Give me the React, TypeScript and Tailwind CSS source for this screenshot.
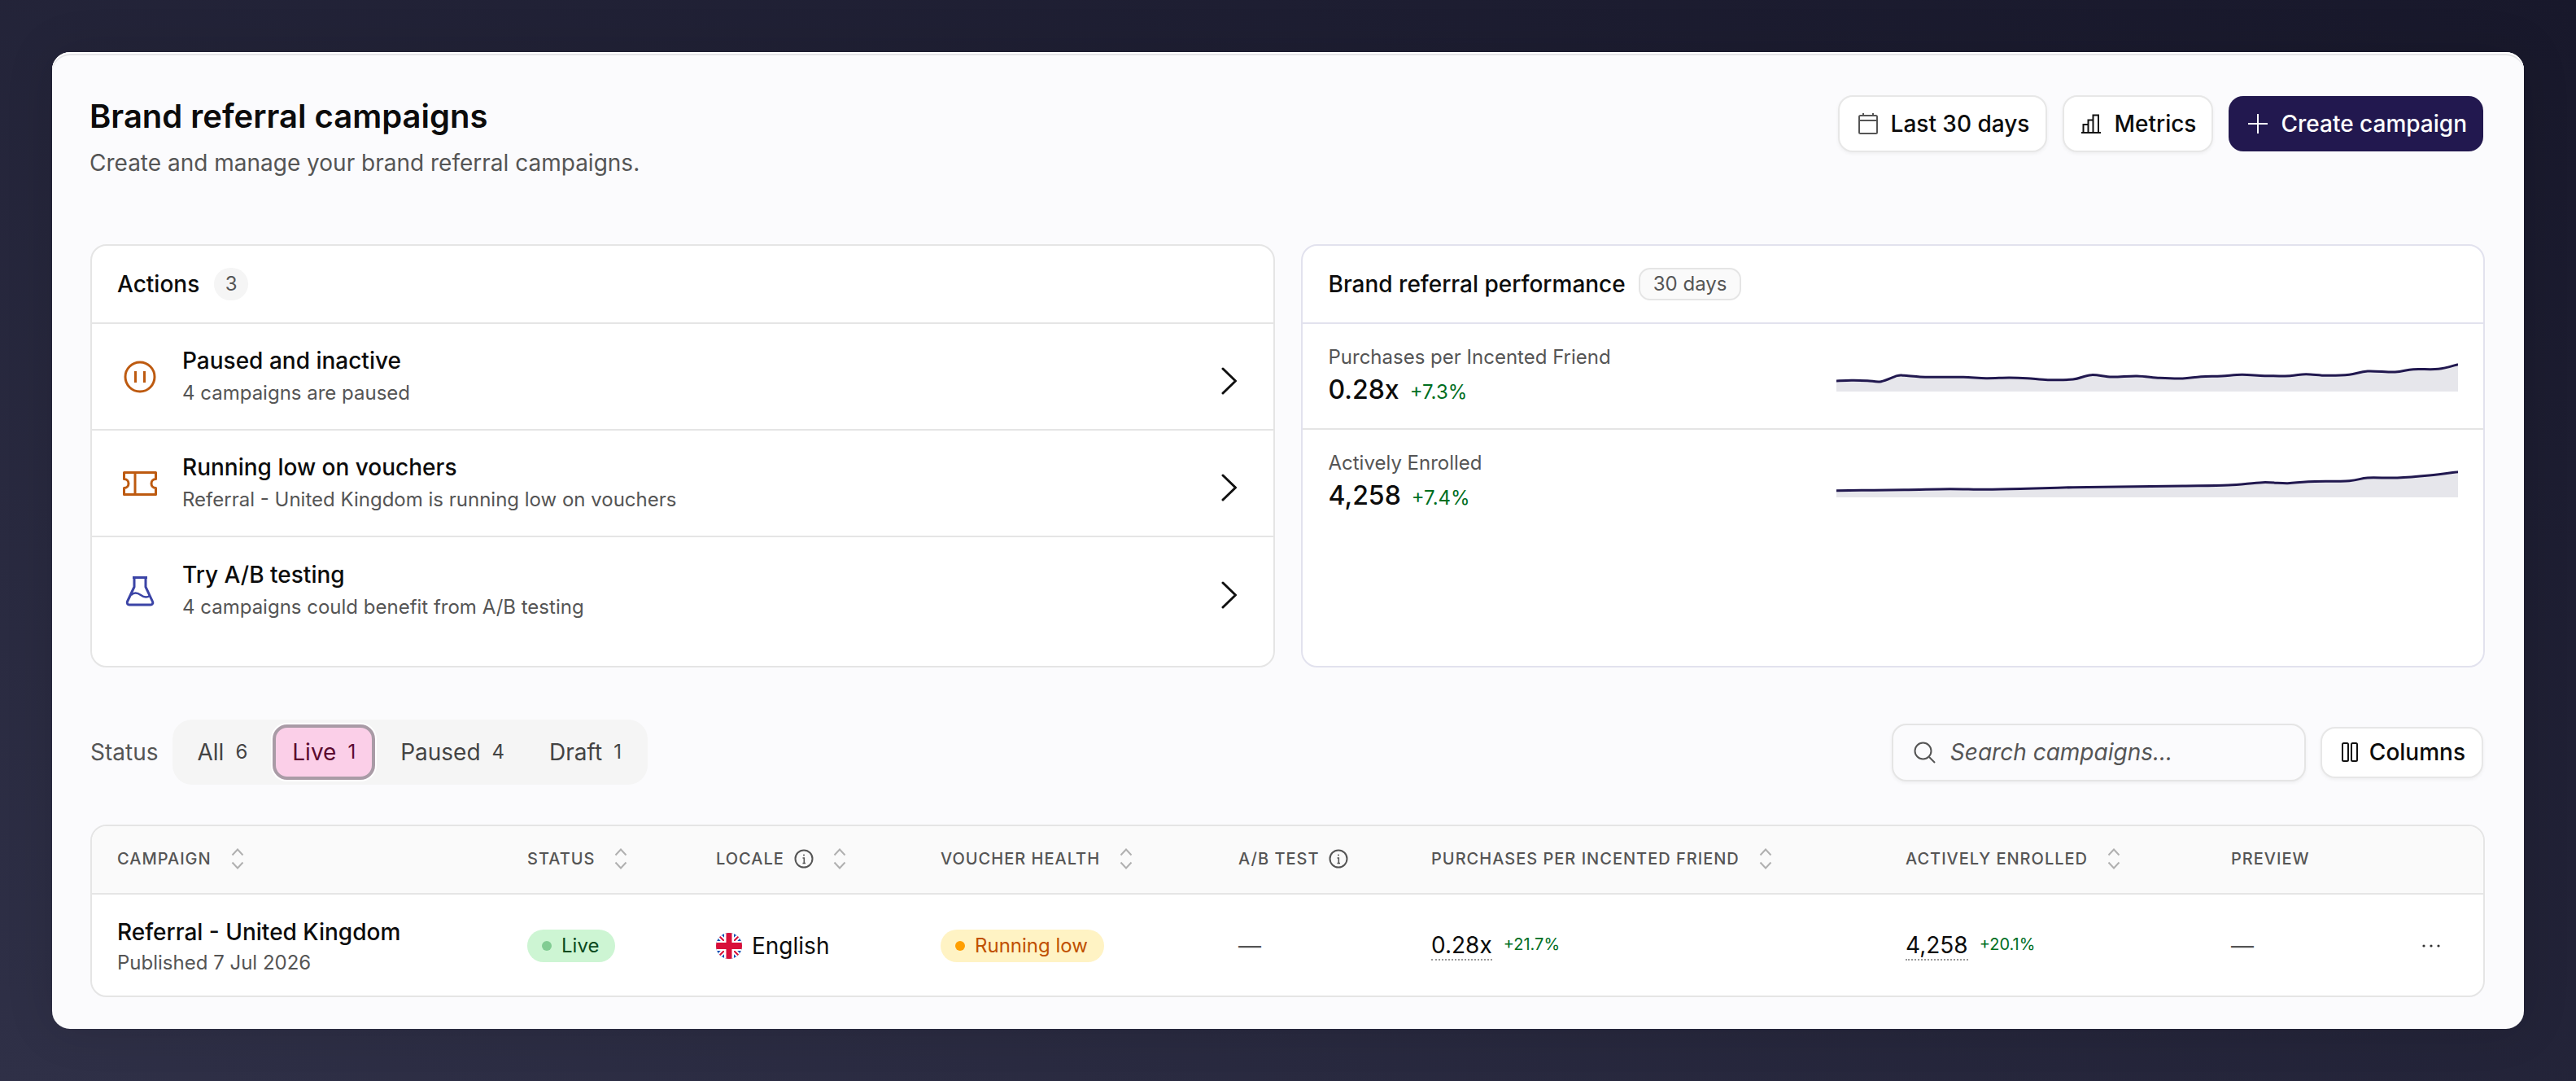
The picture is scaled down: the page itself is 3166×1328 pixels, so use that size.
import React from "react";

const Sort = () => (
  <svg width="16" height="26" viewBox="0 0 16 26" fill="none" stroke="#b0b0b0" strokeWidth="2" className="shrink-0">
    <path d="M1.5 8.5 8 1.5l6.5 7M1.5 17.5l6.5 7 6.5-7" />
  </svg>
);

const Info = () => (
  <svg width="24" height="24" viewBox="0 0 24 24" fill="none" stroke="#555" strokeWidth="2" className="shrink-0">
    <circle cx="12" cy="12" r="10.5" />
    <path d="M10.5 11H12.3V17.5M10.5 17.5H14" strokeWidth="1.6" />
    <circle cx="12" cy="7.5" r="1" fill="#555" stroke="none" />
  </svg>
);

const Chevron = () => (
  <svg width="20" height="34" viewBox="0 0 20 34" fill="none" stroke="#111" strokeWidth="3" strokeLinecap="round" strokeLinejoin="round" className="mt-[10px] shrink-0">
    <path d="M2 2 17.5 17 2 32" />
  </svg>
);

const PauseIcon = () => (
  <svg width="40" height="40" viewBox="0 0 40 40" fill="none" stroke="#bd5a10" strokeWidth="3">
    <circle cx="20" cy="20" r="18" />
    <path d="M14.5 13v14M25.5 13v14" />
  </svg>
);

const TicketIcon = () => (
  <svg width="42" height="30" viewBox="0 0 42 30" fill="none" stroke="#bd5a10" strokeWidth="3" strokeLinejoin="round">
    <path d="M1.5 1.5H40.5V9.5a5.5 5.5 0 0 0 0 11V28.5H1.5V20.5a5.5 5.5 0 0 0 0-11Z" />
    <path d="M15 1.5v27" />
  </svg>
);

const FlaskIcon = () => (
  <svg width="36" height="38" viewBox="0 0 36 38" fill="none" stroke="#3b44a6" strokeWidth="3" strokeLinejoin="round">
    <path d="M9 2.5H27" />
    <path d="M11 2.5V14L2.5 32c-.9 2 .3 4 2.5 4H31c2.2 0 3.4-2 2.5-4L25 14V2.5" />
    <path d="M7 24c4-4 8-3 12 0s8 3 11 1" strokeWidth="2.5" />
  </svg>
);

const Flag = () => (
  <svg width="32" height="32" viewBox="0 0 32 32" className="shrink-0">
    <defs>
      <clipPath id="flagc">
        <circle cx="16" cy="16" r="16" />
      </clipPath>
    </defs>
    <g clipPath="url(#flagc)">
      <rect width="32" height="32" fill="#0a4fb5" />
      <path d="M0 0 32 32M32 0 0 32" stroke="#fff" strokeWidth="6" />
      <path d="M0 0 32 32M32 0 0 32" stroke="#d80f3a" strokeWidth="2" />
      <rect x="10" width="12" height="32" fill="#fff" />
      <rect y="10" width="32" height="12" fill="#fff" />
      <rect x="12.5" width="7" height="32" fill="#d80f3a" />
      <rect y="12" width="32" height="8" fill="#d80f3a" />
    </g>
  </svg>
);

function ActionRow({ icon, title, sub, last }: { icon: React.ReactNode; title: string; sub: string; last?: boolean }) {
  return (
    <div className={`flex h-[131px] items-center pr-[44px] pl-[37px] ${last ? "" : "border-b-2 border-[#e5e5e5]"}`}>
      <div className="flex w-[44px] shrink-0 justify-center">{icon}</div>
      <div className="ml-[30px] flex-1 pb-[2px]">
        <div className="text-[28px] leading-[40px] font-medium text-[#0c0c0c]">{title}</div>
        <div className="mt-[2px] text-[24px] leading-[36px] text-[#555]">{sub}</div>
      </div>
      <Chevron />
    </div>
  );
}

function smooth(pts: string) {
  const n = pts.split(" ").map(Number);
  const p: [number, number][] = [];
  for (let i = 0; i < n.length; i += 2) p.push([n[i], n[i + 1]]);
  let d = `M${p[0][0]} ${p[0][1]}`;
  for (let i = 0; i < p.length - 1; i++) {
    const a = p[Math.max(i - 1, 0)];
    const b = p[i];
    const c = p[i + 1];
    const e = p[Math.min(i + 2, p.length - 1)];
    d += `C${b[0] + (c[0] - a[0]) / 6} ${b[1] + (c[1] - a[1]) / 6} ${c[0] - (e[0] - b[0]) / 6} ${c[1] - (e[1] - b[1]) / 6} ${c[0]} ${c[1]}`;
  }
  return d;
}

function Spark({ pts }: { pts: string }) {
  const d = smooth(pts);
  return (
    <svg width="764" height="70" viewBox="102 0 1361 210" preserveAspectRatio="none" className="block">
      <path d={`${d} L1463 210 L102 210 Z`} fill="#e6e6eb" />
      <path d={d} fill="none" stroke="#21184f" strokeWidth="3" vectorEffect="non-scaling-stroke" strokeLinejoin="round" />
    </svg>
  );
}

const s1 =
  "102 171 135 169 170 170 200 173 235 152 250 151 285 156 320 157 380 157 430 161 480 159 520 161 565 167 620 165 660 149 705 156 760 153 810 160 860 162 900 155 945 153 990 148 1040 152 1095 152 1130 146 1175 151 1225 148 1265 135 1325 138 1365 128 1420 127 1463 110";
const s2 =
  "102 185 250 182 350 179 430 181 520 178 620 173 720 171 860 168 960 165 1035 155 1090 158 1135 152 1225 149 1265 138 1330 138 1400 129 1463 116";

function Metric({ label, value, delta, pts, last }: { label: string; value: string; delta: string; pts: string; last?: boolean }) {
  return (
    <div className={`flex h-[130px] pr-[31px] pl-[32px] ${last ? "" : "border-b-2 border-[#e5e5e5]"}`}>
      <div className="flex-1 pt-[23px]">
        <div className="text-[24px] leading-[36px] text-[#555]">{label}</div>
        <div className="flex items-baseline gap-[13px]">
          <span className="text-[32px] leading-[44px] font-medium text-[#0c0c0c]">{value}</span>
          <span className="text-[24px] leading-[44px] text-[#006e1f]">{delta}</span>
        </div>
      </div>
      <div className="pt-[13px]">
        <Spark pts={pts} />
      </div>
    </div>
  );
}

function Tab({ label, n, active }: { label: string; n: string; active?: boolean }) {
  return (
    <div
      className={
        active
          ? "flex h-[68px] items-center gap-[14px] rounded-[18px] border-4 border-[#a99ba6] bg-[#fbcfe8] px-[20px] text-[#5b0a2f] shadow-[0_0_0_2px_#ffffff]"
          : "flex h-[68px] items-center gap-[14px] px-[24px] text-[#444]"
      }
    >
      <span className="text-[28px] leading-[40px]">{label}</span>
      <span className="text-[24px] leading-[40px]">{n}</span>
    </div>
  );
}

function Th({ label, info, sort = true }: { label: string; info?: boolean; sort?: boolean }) {
  return (
    <div className="flex items-center gap-[24px]">
      <div className="flex items-center gap-[12px]">
        <span className="text-[20px] leading-[28px] font-medium tracking-[0.05em] text-[#555] uppercase">{label}</span>
        {info ? <Info /> : null}
      </div>
      {sort ? <Sort /> : null}
    </div>
  );
}

const Dash = () => <span className="text-[28px] leading-[40px] text-[#555]">—</span>;

const Pill = ({ dot, bg, text, label }: { dot: string; bg: string; text: string; label: string }) => (
  <span className={`inline-flex h-[40px] items-center gap-[12px] rounded-full pr-[20px] pl-[18px] text-[24px] leading-[36px] ${bg} ${text}`}>
    <span className={`h-[12px] w-[12px] rounded-full ${dot}`} />
    {label}
  </span>
);

const Value = ({ v, d }: { v: string; d: string }) => (
  <div className="flex items-start gap-[14px]">
    <span className="border-b-2 border-dotted border-[#999] text-[28px] leading-[34px] text-[#0c0c0c]">{v}</span>
    <span className="pt-[2px] text-[20px] leading-[28px] text-[#006e1f]">{d}</span>
  </div>
);

const cols = "grid grid-cols-[504px_232px_276px_366px_237px_583px_400px_233px_1fr] pl-[31px]";
const btn = "flex items-center rounded-[18px] border-2 border-[#e7e7e7] bg-white text-[28px] font-medium text-[#0c0c0c] shadow-[0_2px_4px_rgba(0,0,0,0.05)]";

export default function App() {
  return (
    <div className="h-[1328px] w-full overflow-hidden bg-linear-to-bl from-[#18182b] to-[#2f3047] px-[64px] pt-[64px] font-['Inter',sans-serif]">
      <div className="h-[1200px] rounded-[22px] bg-[#fbfbfd] pt-[51px] pr-[48px] pl-[47px] shadow-[inset_0_2px_0_#ffffff,inset_0_4px_0_#e5e5e8,0_0_60px_rgba(0,0,0,0.12)]">
        <header className="flex h-[185px] items-start justify-between">
          <div className="-ml-[1px]">
            <h1 className="text-[40px] leading-[56px] font-semibold text-[#0c0c0c]">Brand referral campaigns</h1>
            <p className="mt-[8px] text-[28px] leading-[42px] text-[#555]">Create and manage your brand referral campaigns.</p>
          </div>
          <div className="mt-[2px] mr-[2px] flex items-center gap-[19px]">
            <button className={`${btn} h-[70px] gap-[16px] pr-[20px] pl-[23px]`}>
              <svg width="24" height="28" viewBox="0 0 24 28" fill="none" stroke="#555" strokeWidth="2">
                <rect x="1" y="4" width="22" height="22" rx="1.5" />
                <path d="M1 10H23M6 1V5M18 1V5" />
              </svg>
              Last 30 days
            </button>
            <button className={`${btn} h-[70px] gap-[16px] pr-[19px] pl-[21px]`}>
              <svg width="24" height="24" viewBox="0 0 24 24" fill="none" stroke="#111" strokeWidth="2">
                <path d="M0 23H24M2.5 23V13H8.5V23M8.5 23V7.5H14.5V23M14.5 23V1.5H21V23" />
              </svg>
              Metrics
            </button>
            <button className="flex h-[68px] items-center gap-[16px] rounded-[18px] bg-[#22184f] pr-[20px] pl-[24px] text-[28px] font-medium text-white">
              <svg width="24" height="24" viewBox="0 0 24 24" fill="none" stroke="#fff" strokeWidth="2">
                <path d="M12 0V24M0 12H24" />
              </svg>
              Create campaign
            </button>
          </div>
        </header>

        <section className="grid h-[520px] grid-cols-2 gap-[32px]">
          <div className="overflow-hidden rounded-[20px] border-2 border-[#e5e5e5] bg-white">
            <div className="flex h-[96px] items-center gap-[18px] border-b-2 border-[#e5e5e5] pl-[31px]">
              <span className="text-[28px] font-medium text-[#0c0c0c]">Actions</span>
              <span className="flex h-[40px] w-[42px] items-center justify-center rounded-full bg-[#f5f5f5] text-[24px] text-[#555]">3</span>
            </div>
            <ActionRow icon={<PauseIcon />} title="Paused and inactive" sub="4 campaigns are paused" />
            <ActionRow icon={<TicketIcon />} title="Running low on vouchers" sub="Referral - United Kingdom is running low on vouchers" />
            <ActionRow icon={<FlaskIcon />} title="Try A/B testing" sub="4 campaigns could benefit from A/B testing" last />
          </div>
          <div className="overflow-hidden rounded-[20px] border-2 border-[#e2e2ee] bg-white">
            <div className="flex h-[96px] items-center gap-[16px] border-b-2 border-[#e2e2ee] pl-[32px]">
              <span className="text-[28px] font-medium text-[#0c0c0c]">Brand referral performance</span>
              <span className="flex h-[40px] items-center rounded-[14px] border-2 border-[#e5e5e5] bg-[#fafafa] px-[16px] text-[24px] text-[#555]">30 days</span>
            </div>
            <Metric label="Purchases per Incented Friend" value="0.28x" delta="+7.3%" pts={s1} />
            <Metric label="Actively Enrolled" value="4,258" delta="+7.4%" pts={s2} last />
          </div>
        </section>

        <div className="mt-[64px] flex h-[80px] items-center justify-between">
          <div className="flex items-center gap-[18px]">
            <span className="text-[28px] text-[#555]">Status</span>
            <div className="flex h-[80px] items-center gap-[7px] rounded-[24px] bg-[#f5f5f5] pr-[8px] pl-[6px]">
              <Tab label="All" n="6" />
              <Tab label="Live" n="1" active />
              <Tab label="Paused" n="4" />
              <Tab label="Draft" n="1" />
            </div>
          </div>
          <div className="mr-[2px] flex items-center gap-[18px]">
            <div className="flex h-[71px] w-[509px] items-center gap-[18px] rounded-[18px] border-2 border-[#e5e5e5] bg-[#fbfbfd] pl-[24px] shadow-[0_2px_4px_rgba(0,0,0,0.05)]">
              <svg width="28" height="28" viewBox="0 0 28 28" fill="none" stroke="#555" strokeWidth="2">
                <circle cx="12.5" cy="12.5" r="10" />
                <path d="M20 20 27 27" />
              </svg>
              <span className="text-[28px] text-[#555] italic">Search campaigns...</span>
            </div>
            <button className={`${btn} h-[63px] gap-[14px] pr-[20px] pl-[24px]`}>
              <svg width="20" height="24" viewBox="0 0 20 24" fill="none" stroke="#111" strokeWidth="2">
                <rect x="1" y="1" width="7" height="22" rx="1.5" />
                <rect x="12" y="1" width="7" height="22" rx="1.5" />
              </svg>
              Columns
            </button>
          </div>
        </div>

        <div className="mt-[49px] h-[212px] overflow-hidden rounded-[20px] border-2 border-[#e5e5e5] bg-white">
          <div className={`${cols} h-[84px] items-center border-b-2 border-[#e5e5e5] bg-[#fafafa] pb-[2px]`}>
            <Th label="Campaign" />
            <Th label="Status" />
            <Th label="Locale" info />
            <Th label="Voucher Health" />
            <Th label="A/B Test" info sort={false} />
            <Th label="Purchases per Incented Friend" />
            <Th label="Actively Enrolled" />
            <Th label="Preview" sort={false} />
            <div />
          </div>
          <div className={`${cols} h-[124px] items-center pt-[2px]`}>
            <div className="pt-[1px]">
              <div className="text-[28px] leading-[40px] font-medium text-[#0c0c0c]">Referral - United Kingdom</div>
              <div className="text-[24px] leading-[36px] text-[#555]">Published 7 Jul 2026</div>
            </div>
            <div>
              <Pill dot="bg-[#82cc93]" bg="bg-[#cdf5d3]" text="text-[#0b4a1e]" label="Live" />
            </div>
            <div className="flex items-center gap-[12px] text-[28px] text-[#0c0c0c]">
              <Flag />
              English
            </div>
            <div>
              <Pill dot="bg-[#ff9f00]" bg="bg-[#fff3c4]" text="text-[#c05000]" label="Running low" />
            </div>
            <Dash />
            <Value v="0.28x" d="+21.7%" />
            <Value v="4,258" d="+20.1%" />
            <Dash />
            <svg width="24" height="6" viewBox="0 0 24 6" fill="#333" className="ml-[1px]">
              <circle cx="3" cy="3" r="1.6" />
              <circle cx="12" cy="3" r="1.6" />
              <circle cx="21" cy="3" r="1.6" />
            </svg>
          </div>
        </div>
      </div>
    </div>
  );
}
